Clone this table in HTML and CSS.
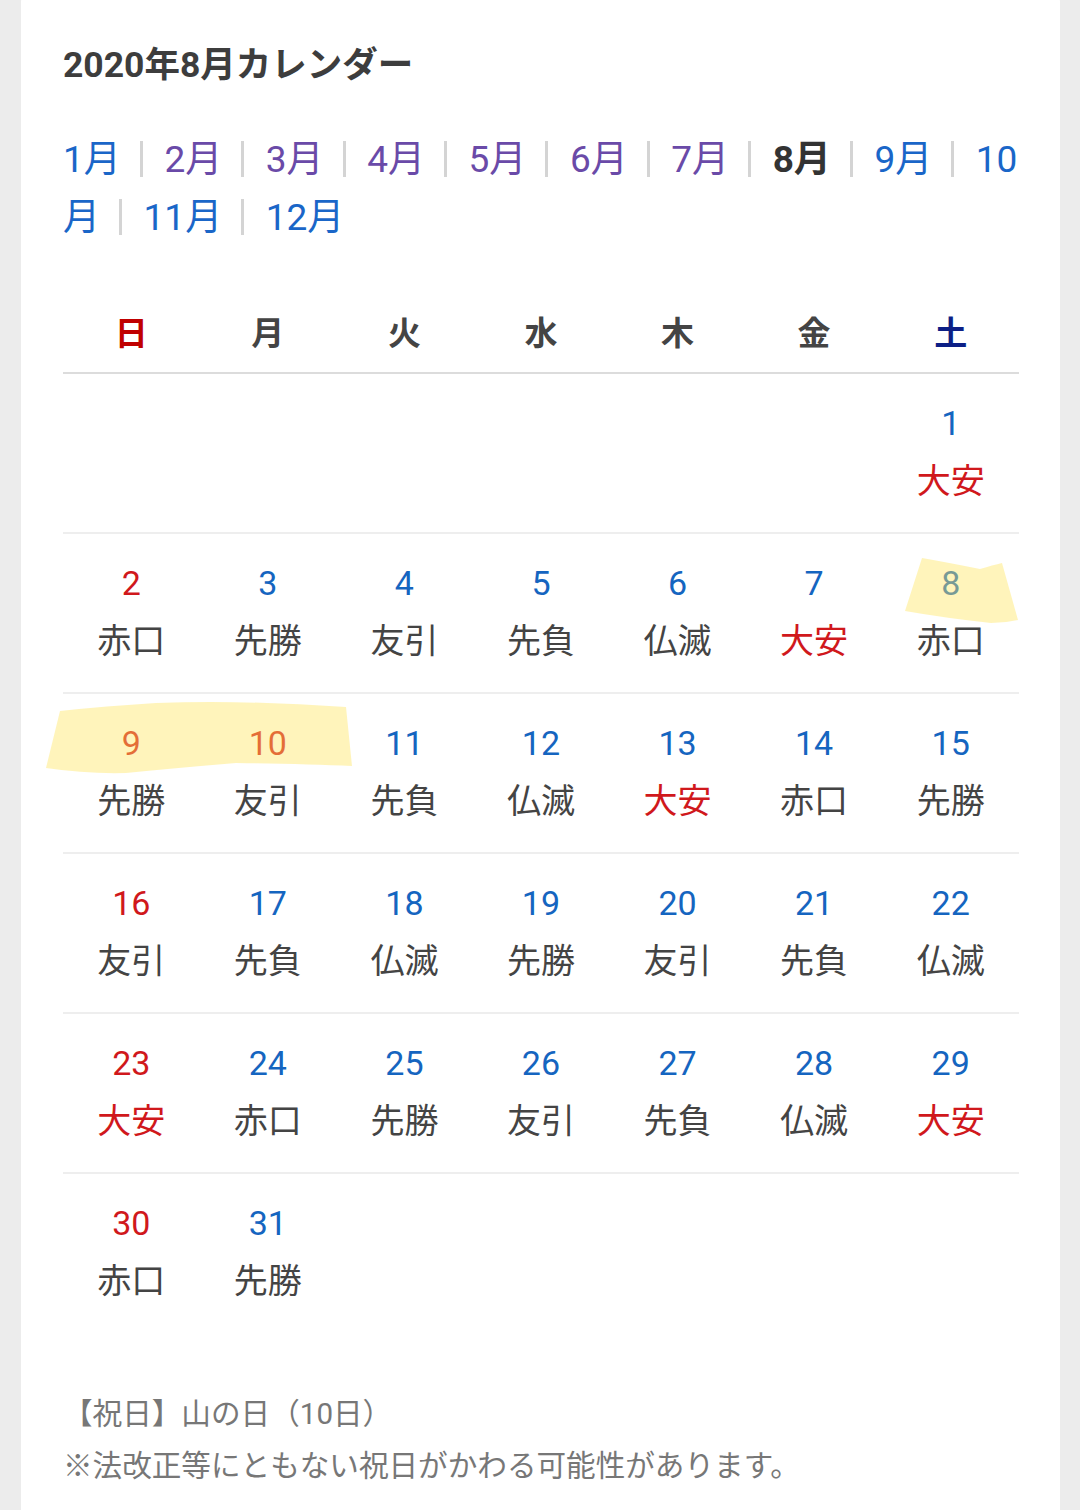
FILE: index.html
```html
<!DOCTYPE html>
<html lang="ja">

<head>
    <meta charset="UTF-8">
    <meta name="viewport" content="width=device-width, initial-scale=1.0">
    <title>2020年8月カレンダー</title>

    <link rel="stylesheet" href="styles.css">
</head>

<body>
    <div class="card">
        <h2 class="title">2020年8月カレンダー</h2>

        <div class="months">
            <a href="#">1月</a>
            <a href="#" class="visited">2月</a>
            <a href="#" class="visited">3月</a>
            <a href="#" class="visited">4月</a>
            <a href="#" class="visited">5月</a>
            <a href="#" class="visited">6月</a>
            <a href="#" class="visited">7月</a>
            <a class="current">8月</a>
            <a href="#">9月</a>
            <a href="#">10月</a>
            <a href="#">11月</a>
            <a href="#">12月</a>
        </div>

        <table class="calendar">
            <thead>
                <tr>
                    <th class="sun">日</th>
                    <th>月</th>
                    <th>火</th>
                    <th>水</th>
                    <th>木</th>
                    <th>金</th>
                    <th class="sat">土</th>
                </tr>
            </thead>
            <tbody>
                <tr>
                    <td></td><td></td><td></td><td></td><td></td><td></td>
                    <td><span class="day">1</span><span class="rokuyo taian">大安</span></td>
                </tr>
                <tr>
                    <td><span class="day red">2</span><span class="rokuyo">赤口</span></td>
                    <td><span class="day">3</span><span class="rokuyo">先勝</span></td>
                    <td><span class="day">4</span><span class="rokuyo">友引</span></td>
                    <td><span class="day">5</span><span class="rokuyo">先負</span></td>
                    <td><span class="day">6</span><span class="rokuyo">仏滅</span></td>
                    <td><span class="day">7</span><span class="rokuyo taian">大安</span></td>
                    <td><span class="day">8</span><span class="rokuyo">赤口</span></td>
                </tr>
                <tr>
                    <td><span class="day red">9</span><span class="rokuyo">先勝</span></td>
                    <td><span class="day red">10</span><span class="rokuyo">友引</span></td>
                    <td><span class="day">11</span><span class="rokuyo">先負</span></td>
                    <td><span class="day">12</span><span class="rokuyo">仏滅</span></td>
                    <td><span class="day">13</span><span class="rokuyo taian">大安</span></td>
                    <td><span class="day">14</span><span class="rokuyo">赤口</span></td>
                    <td><span class="day">15</span><span class="rokuyo">先勝</span></td>
                </tr>
                <tr>
                    <td><span class="day red">16</span><span class="rokuyo">友引</span></td>
                    <td><span class="day">17</span><span class="rokuyo">先負</span></td>
                    <td><span class="day">18</span><span class="rokuyo">仏滅</span></td>
                    <td><span class="day">19</span><span class="rokuyo">先勝</span></td>
                    <td><span class="day">20</span><span class="rokuyo">友引</span></td>
                    <td><span class="day">21</span><span class="rokuyo">先負</span></td>
                    <td><span class="day">22</span><span class="rokuyo">仏滅</span></td>
                </tr>
                <tr>
                    <td><span class="day red">23</span><span class="rokuyo taian">大安</span></td>
                    <td><span class="day">24</span><span class="rokuyo">赤口</span></td>
                    <td><span class="day">25</span><span class="rokuyo">先勝</span></td>
                    <td><span class="day">26</span><span class="rokuyo">友引</span></td>
                    <td><span class="day">27</span><span class="rokuyo">先負</span></td>
                    <td><span class="day">28</span><span class="rokuyo">仏滅</span></td>
                    <td><span class="day">29</span><span class="rokuyo taian">大安</span></td>
                </tr>
                <tr>
                    <td><span class="day red">30</span><span class="rokuyo">赤口</span></td>
                    <td><span class="day">31</span><span class="rokuyo">先勝</span></td>
                    <td></td><td></td><td></td><td></td><td></td>
                </tr>
            </tbody>
        </table>

        <div class="note">
            <p>【祝日】山の日（10日）</p>
            <p>※法改正等にともない祝日がかわる可能性があります。</p>
        </div>

        <!-- highlighter marks -->
        <svg class="marker marker-8" width="120" height="72" viewBox="0 0 120 72">
            <path d="M17 2 Q40 6 75 13 Q88 9 97 7 L113 64 Q100 67 86 67 Q40 62 0 55 Z" />
        </svg>
        <svg class="marker marker-9" width="310" height="74" viewBox="0 0 310 74">
            <path d="M14 9 Q60 4 110 1 Q200 -2 300 5 L306 64 Q260 62 190 61 Q130 66 80 71 Q40 72 0 66 Z" />
        </svg>
    </div>
</body>

</html>
```

FILE: styles.css
```css
* {
    margin: 0;
    padding: 0;
    box-sizing: border-box;
}
body {
    background-color: #ececec;
    font-family: Roboto, "Noto Sans CJK JP", sans-serif;
    color: #444;
}
.card {
    position: relative;
    margin: -8px 20px 0 21px;
    padding: 48px 41px 30px 42px;
    min-height: 1518px;
    background: #fff;
    border-radius: 10px;
}
.title {
    font-size: 35.5px;
    font-weight: bold;
    line-height: 50px;
    color: #3d3d3d;
}
.months {
    margin-top: 41px;
    font-size: 37px;
    line-height: 58px;
}
.months a {
    color: #1a66c8;
    text-decoration: none;
}
.months a.visited {
    color: #6a4aa8;
}
.months a.current {
    color: #333;
    font-weight: bold;
}
.months a + a::before {
    content: "";
    display: inline-block;
    width: 3px;
    height: 36px;
    margin: 0 21.4px 0 10px;
    vertical-align: -5px;
    background: #d4d4d4;
}
.calendar {
    width: 100%;
    margin-top: 47px;
    border-collapse: collapse;
    table-layout: fixed;
    text-align: center;
}
.calendar th {
    height: 79px;
    padding-bottom: 5px;
    font-size: 33px;
    font-weight: bold;
    color: #444;
    border-bottom: 2px solid #dcdcdc;
}
.calendar th.sun {
    color: #c00000;
}
.calendar th.sat {
    color: #0d1f86;
}
.calendar td {
    height: 160px;
    vertical-align: top;
    padding-top: 20px;
    border-bottom: 2px solid #eeeeee;
}
.calendar tr:last-child td {
    border-bottom: none;
}
.day,
.rokuyo {
    display: block;
    font-size: 34px;
    line-height: 58px;
}
.day {
    color: #1565c0;
}
.day.red {
    color: #d0181c;
}
.rokuyo {
    color: #444;
}
.rokuyo.taian {
    color: #d0181c;
}
.note {
    margin-top: 55px;
    font-size: 29.6px;
    line-height: 52px;
    color: #777;
}
.marker {
    position: absolute;
}
.marker path {
    fill: #ffe45c;
    opacity: 0.42;
}
.marker-8 {
    left: 884px;
    top: 564px;
}
.marker-9 {
    left: 25px;
    top: 710px;
}
```
